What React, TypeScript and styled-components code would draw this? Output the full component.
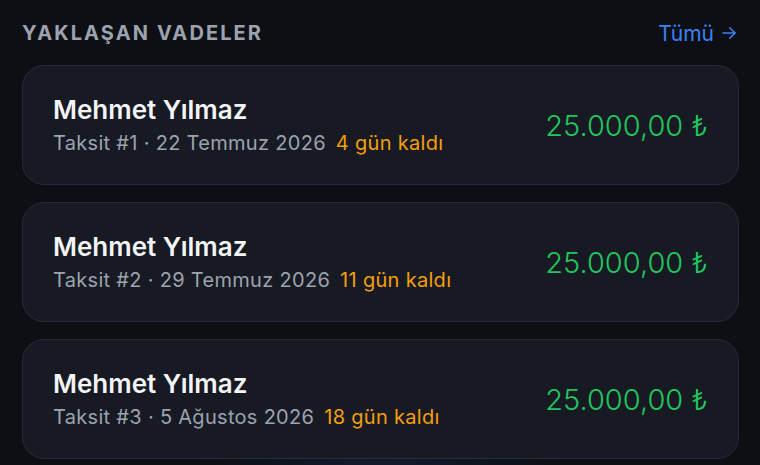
import React from 'react';
import styled, { createGlobalStyle } from 'styled-components';

const GlobalStyle = createGlobalStyle`
  html, body {
    margin: 0;
    padding: 0;
    background: #0e0f14;
  }
  body {
    font-family: Inter, 'Noto Sans', 'DejaVu Sans', sans-serif;
    -webkit-font-smoothing: antialiased;
  }
`;

const Page = styled.div`
  width: 760px;
  height: 465px;
  box-sizing: border-box;
  padding: 18px 21px 0 22px;
  overflow: hidden;
  display: flex;
  flex-direction: column;
  gap: 17px;
  background:
    radial-gradient(ellipse 260px 40px at 50% 100%, rgba(40, 60, 120, 0.25), transparent 70%),
    #0e0f14;
`;

const Header = styled.div`
  display: flex;
  align-items: center;
  justify-content: space-between;
  height: 30px;
`;

const Title = styled.h2`
  margin: 0;
  font-size: 20px;
  font-weight: 700;
  letter-spacing: 2.1px;
  color: #9ca3af;
`;

const SeeAll = styled.a`
  font-size: 21px;
  font-weight: 400;
  color: #3b82f6;
  text-decoration: none;
  display: flex;
  align-items: center;
  gap: 6px;
  margin-right: 1px;
`;

const List = styled.div`
  display: flex;
  flex-direction: column;
  gap: 17px;
`;

const Card = styled.div`
  height: 120px;
  box-sizing: border-box;
  border: 1.5px solid #272b39;
  border-radius: 22px;
  background: #171a23;
  padding: 0 30px 0 30px;
  display: flex;
  align-items: center;
  justify-content: space-between;
`;

const Info = styled.div`
  display: flex;
  flex-direction: column;
  gap: 4px;
`;

const Name = styled.div`
  font-size: 26px;
  font-weight: 600;
  line-height: 32px;
  color: #f3f4f6;
`;

const Meta = styled.div`
  font-size: 20px;
  line-height: 26px;
  letter-spacing: 0.3px;
  color: #9ca3af;
  display: flex;
  gap: 10px;
`;

const DaysLeft = styled.span`
  color: #f59e0b;
`;

const Amount = styled.div`
  font-size: 29px;
  font-weight: 300;
  color: #22c55e;
`;

const items = [
  { no: 1, date: '22 Temmuz 2026', days: 4 },
  { no: 2, date: '29 Temmuz 2026', days: 11 },
  { no: 3, date: '5 Ağustos 2026', days: 18 },
];

export default function App() {
  return (
    <>
      <GlobalStyle />
      <Page>
        <Header>
          <Title>YAKLAŞAN VADELER</Title>
          <SeeAll href="#">
            Tümü
            <svg width="18" height="18" viewBox="0 0 24 24" fill="none" stroke="currentColor" strokeWidth="2" strokeLinecap="round" strokeLinejoin="round">
              <path d="M4 12h16" />
              <path d="M13 5l7 7-7 7" />
            </svg>
          </SeeAll>
        </Header>
        <List>
          {items.map((it) => (
            <Card key={it.no}>
              <Info>
                <Name>Mehmet Yılmaz</Name>
                <Meta>
                  <span>Taksit #{it.no} · {it.date}</span>
                  <DaysLeft>{it.days} gün kaldı</DaysLeft>
                </Meta>
              </Info>
              <Amount>25.000,00 ₺</Amount>
            </Card>
          ))}
        </List>
      </Page>
    </>
  );
}
